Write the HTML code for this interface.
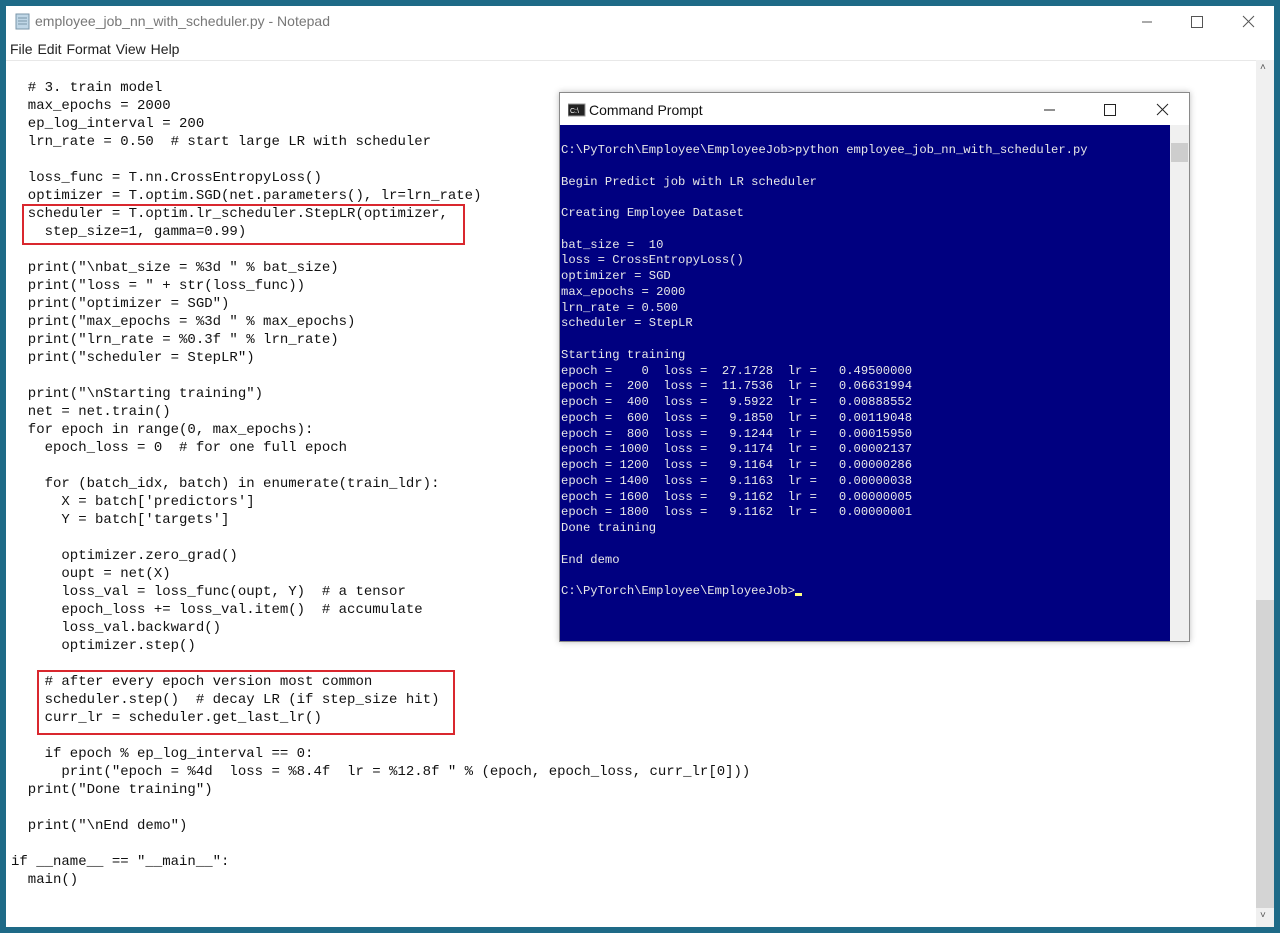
<!DOCTYPE html>
<html><head><meta charset="utf-8"><style>
*{margin:0;padding:0;box-sizing:border-box}
html,body{width:1280px;height:933px;overflow:hidden;background:#1e6a87}
.np{position:absolute;left:6px;top:6px;width:1268px;height:921px;background:#fff}
.title{position:absolute;left:29px;top:7px;font:14px "Liberation Sans",sans-serif;color:#777}
.menu{position:absolute;left:4px;top:35px;font:14px "Liberation Sans",sans-serif;color:#222;word-spacing:1px}
.sep{position:absolute;left:0;top:54px;width:1268px;height:1px;background:#e8e8e8}
pre{font-family:"Liberation Mono",monospace;position:absolute;margin:0}
.code{left:11px;top:79px;font-size:14px;line-height:18px;color:#111}
.box{position:absolute;border:2px solid #d9272e}
.vs{position:absolute;left:1256px;top:60px;width:18px;height:867px;background:#f0f0f0}
.cmd{position:absolute;left:559px;top:92px;width:631px;height:550px;background:#fff;border:1px solid #8a8a8a;box-shadow:0 0 6px rgba(0,0,0,.25)}
.cmdt{position:absolute;left:29px;top:9px;font:14px "Liberation Sans",sans-serif;color:#111}
.blue{position:absolute;left:0;top:32px;width:610px;height:516px;background:#000080}
.con{left:1px;top:50px;font-size:12.2px;line-height:15.75px;color:#e8e8e8}
</style></head><body>
<div class="np">
 <svg style="position:absolute;left:8px;top:6px" width="18" height="18"><rect x="2" y="2" width="13" height="15" fill="#bfd6e6" stroke="#7a95a8"/><line x1="4" y1="6" x2="13" y2="6" stroke="#7a95a8"/><line x1="4" y1="9" x2="13" y2="9" stroke="#7a95a8"/><line x1="4" y1="12" x2="13" y2="12" stroke="#7a95a8"/></svg>
 <div class="title">employee_job_nn_with_scheduler.py - Notepad</div>
 <svg style="position:absolute;left:1132px;top:4px" width="130" height="24" stroke="#555" fill="none"><line x1="4" y1="12" x2="14" y2="12"/><rect x="53.5" y="6.5" width="11" height="11"/><path d="M105 6 L116 17 M116 6 L105 17"/></svg>
 <div class="menu">File Edit Format View Help</div>
 <div class="sep"></div>
</div>
<pre class="code">  # 3. train model
  max_epochs = 2000
  ep_log_interval = 200
  lrn_rate = 0.50  # start large LR with scheduler

  loss_func = T.nn.CrossEntropyLoss()
  optimizer = T.optim.SGD(net.parameters(), lr=lrn_rate)
  scheduler = T.optim.lr_scheduler.StepLR(optimizer,
    step_size=1, gamma=0.99)

  print("\nbat_size = %3d " % bat_size)
  print("loss = " + str(loss_func))
  print("optimizer = SGD")
  print("max_epochs = %3d " % max_epochs)
  print("lrn_rate = %0.3f " % lrn_rate)
  print("scheduler = StepLR")

  print("\nStarting training")
  net = net.train()
  for epoch in range(0, max_epochs):
    epoch_loss = 0  # for one full epoch

    for (batch_idx, batch) in enumerate(train_ldr):
      X = batch['predictors']
      Y = batch['targets']

      optimizer.zero_grad()
      oupt = net(X)
      loss_val = loss_func(oupt, Y)  # a tensor
      epoch_loss += loss_val.item()  # accumulate
      loss_val.backward()
      optimizer.step()

    # after every epoch version most common
    scheduler.step()  # decay LR (if step_size hit)
    curr_lr = scheduler.get_last_lr()

    if epoch % ep_log_interval == 0:
      print("epoch = %4d  loss = %8.4f  lr = %12.8f " % (epoch, epoch_loss, curr_lr[0]))
  print("Done training")

  print("\nEnd demo")

if __name__ == "__main__":
  main()</pre>
<div class="box" style="left:22px;top:204px;width:443px;height:41px"></div>
<div class="box" style="left:37px;top:670px;width:418px;height:65px"></div>
<div class="vs"><div style="position:absolute;left:0;top:540px;width:18px;height:308px;background:#d4d4d4"></div>
<div style="position:absolute;left:4px;top:2px;font:10px 'Liberation Sans';color:#555">˄</div>
<div style="position:absolute;left:4px;top:850px;font:10px 'Liberation Sans';color:#555">˅</div></div>
<div class="cmd">
 <svg style="position:absolute;left:8px;top:10px" width="18" height="14"><rect x="0" y="1" width="17" height="12" fill="#222" stroke="#999"/><text x="2" y="10" font-size="7" fill="#fff" font-family="Liberation Sans">C:\</text></svg>
 <div class="cmdt">Command Prompt</div>
 <svg style="position:absolute;left:480px;top:6px" width="150" height="22" stroke="#222" fill="none"><line x1="4" y1="11" x2="15" y2="11"/><rect x="64.5" y="5.5" width="11" height="11"/><path d="M117 5 L128 16 M128 5 L117 16"/></svg>
 <div class="blue"></div>
 <div style="position:absolute;left:610px;top:32px;width:19px;height:516px;background:#f0f0f0"><div style="position:absolute;left:1px;top:18px;width:17px;height:19px;background:#cdcdcd"></div></div>
 <pre class="con">C:\PyTorch\Employee\EmployeeJob&gt;python employee_job_nn_with_scheduler.py

Begin Predict job with LR scheduler

Creating Employee Dataset

bat_size =  10
loss = CrossEntropyLoss()
optimizer = SGD
max_epochs = 2000
lrn_rate = 0.500
scheduler = StepLR

Starting training
epoch =    0  loss =  27.1728  lr =   0.49500000
epoch =  200  loss =  11.7536  lr =   0.06631994
epoch =  400  loss =   9.5922  lr =   0.00888552
epoch =  600  loss =   9.1850  lr =   0.00119048
epoch =  800  loss =   9.1244  lr =   0.00015950
epoch = 1000  loss =   9.1174  lr =   0.00002137
epoch = 1200  loss =   9.1164  lr =   0.00000286
epoch = 1400  loss =   9.1163  lr =   0.00000038
epoch = 1600  loss =   9.1162  lr =   0.00000005
epoch = 1800  loss =   9.1162  lr =   0.00000001
Done training

End demo

C:\PyTorch\Employee\EmployeeJob&gt;<span style="display:inline-block;width:7px;height:3px;background:#ffff80;vertical-align:-2px"></span></pre>
</div>
</body></html>
